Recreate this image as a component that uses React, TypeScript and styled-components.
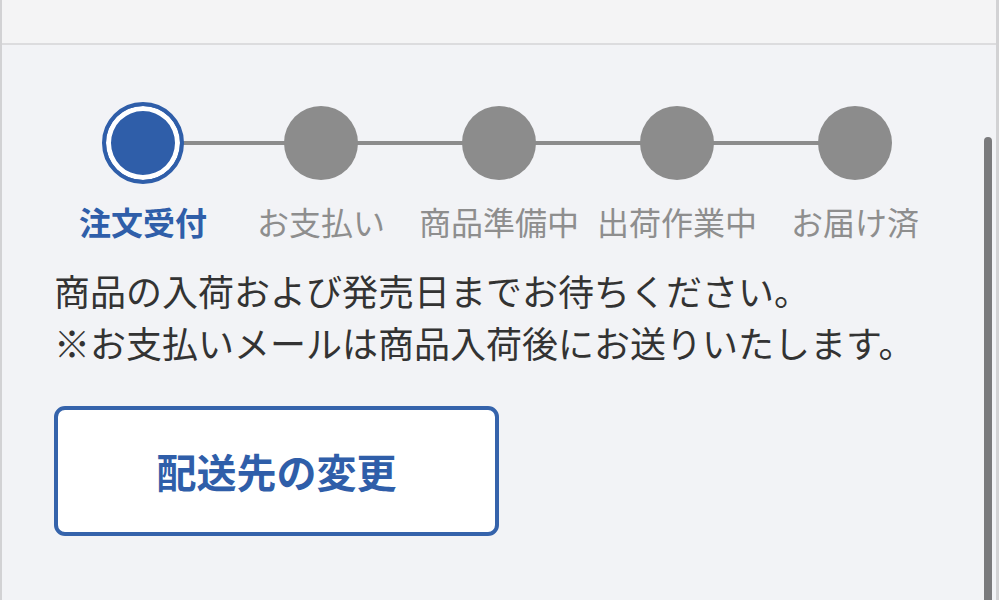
import { ReactElement } from 'react';
import styled, { createGlobalStyle } from 'styled-components';

const GlobalStyle = createGlobalStyle`
  html, body {
    margin: 0;
    padding: 0;
    background: #f2f3f6;
  }
  body {
    font-family: 'Noto Sans CJK JP', 'Noto Sans', sans-serif;
  }
`;

const Page = styled.div`
  position: relative;
  height: 600px;
  overflow: hidden;
  border-left: 2px solid #d2d2d4;
  border-right: 3px solid #d2d2d4;
  box-sizing: border-box;
`;
const Header = styled.div`
  height: 43px;
  background: #f4f4f5;
  border-bottom: 2px solid #dcdcde;
`;
const Content = styled.div`
  display: flex;
  flex-direction: column;
  align-items: flex-start;
  padding: 57px 0 0 52px;
`;
const Stepper = styled.div`
  display: grid;
  grid-template-columns: repeat(5, 178px);
`;
const Step = styled.div<{ $last?: boolean }>`
  position: relative;
  display: flex;
  flex-direction: column;
  align-items: center;

  &::before {
    content: '';
    display: ${({ $last }) => ($last ? 'none' : 'block')};
    position: absolute;
    top: 39px;
    left: 89px;
    width: 178px;
    height: 4px;
    background: #8c8c8c;
  }
`;
const CircleSlot = styled.div`
  position: relative;
  z-index: 1;
  height: 82px;
  display: flex;
  align-items: center;
  justify-content: center;
`;
const Dot = styled.div<{ $active?: boolean }>`
  box-sizing: border-box;
  width: ${({ $active }) => ($active ? 82 : 74)}px;
  height: ${({ $active }) => ($active ? 82 : 74)}px;
  border-radius: 50%;
  background: ${({ $active }) => ($active ? '#2f5ea9' : '#8c8c8c')};
  border: ${({ $active }) => ($active ? '4px solid #2f5ea9' : 'none')};
  box-shadow: ${({ $active }) => ($active ? 'inset 0 0 0 5px #ffffff' : 'none')};
`;
const Label = styled.div<{ $active?: boolean }>`
  margin-top: 13px;
  font-size: 32px;
  line-height: 48px;
  white-space: nowrap;
  font-weight: ${({ $active }) => ($active ? 700 : 400)};
  color: ${({ $active }) => ($active ? '#2f5ea9' : '#8e8e8e')};
`;
const Notice = styled.p`
  margin: 19px 0 0 0;
  font-size: 36px;
  line-height: 52px;
  color: #333333;
`;
const ChangeButton = styled.button`
  margin: 38px 0 0 0;
  width: 445px;
  height: 130px;
  box-sizing: border-box;
  background: #ffffff;
  border: 4px solid #3563ab;
  border-radius: 11px;
  font-family: inherit;
  font-size: 40px;
  font-weight: 700;
  color: #2f5ea9;
  cursor: pointer;
`;
const ScrollThumb = styled.div`
  position: absolute;
  top: 137px;
  right: 4px;
  width: 8px;
  height: 500px;
  border-radius: 4px;
  background: #7a7a7c;
`;

const steps = ['注文受付', 'お支払い', '商品準備中', '出荷作業中', 'お届け済'];

function App(): ReactElement {
  return (
    <>
      <GlobalStyle />
      <Page>
        <Header />
        <Content>
          <Stepper>
            {steps.map((name, i) => (
              <Step key={name} $last={i === steps.length - 1}>
                <CircleSlot>
                  <Dot $active={i === 0} />
                </CircleSlot>
                <Label $active={i === 0}>{name}</Label>
              </Step>
            ))}
          </Stepper>
          <Notice>
            商品の入荷および発売日までお待ちください。
            <br />
            ※お支払いメールは商品入荷後にお送りいたします。
          </Notice>
          <ChangeButton type="button">配送先の変更</ChangeButton>
        </Content>
        <ScrollThumb />
      </Page>
    </>
  );
}

export default App;
